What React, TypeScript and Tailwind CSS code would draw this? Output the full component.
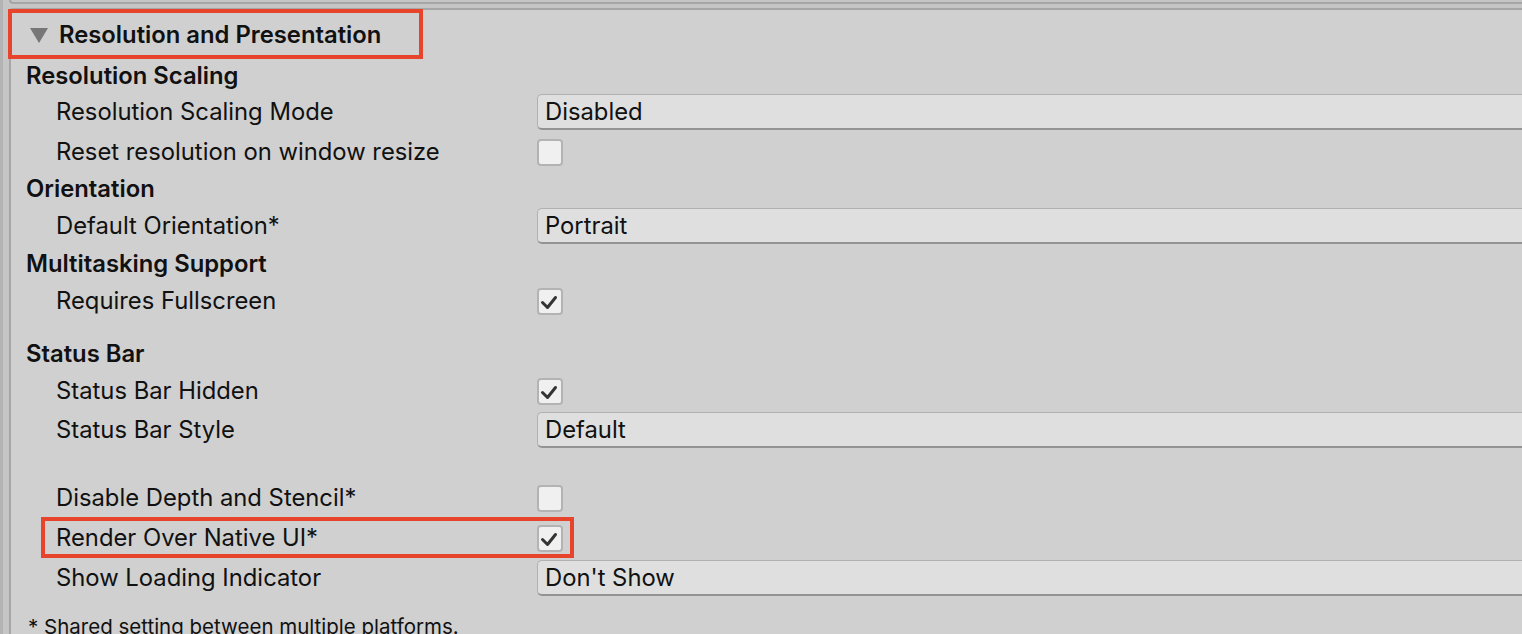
type Row =
  | { kind: "section"; label: string; h: number }
  | { kind: "dropdown"; label: string; value: string; h: number }
  | { kind: "check"; label: string; checked: boolean; h: number }
  | { kind: "space"; h: number };

const rows: Row[] = [
  { kind: "section", label: "Resolution Scaling", h: 32 },
  { kind: "dropdown", label: "Resolution Scaling Mode", value: "Disabled", h: 40 },
  { kind: "check", label: "Reset resolution on window resize", checked: false, h: 40 },
  { kind: "section", label: "Orientation", h: 34 },
  { kind: "dropdown", label: "Default Orientation*", value: "Portrait", h: 40 },
  { kind: "section", label: "Multitasking Support", h: 36 },
  { kind: "check", label: "Requires Fullscreen", checked: true, h: 38 },
  { kind: "space", h: 16 },
  { kind: "section", label: "Status Bar", h: 36 },
  { kind: "check", label: "Status Bar Hidden", checked: true, h: 38 },
  { kind: "dropdown", label: "Status Bar Style", value: "Default", h: 40 },
  { kind: "space", h: 28 },
  { kind: "check", label: "Disable Depth and Stencil*", checked: false, h: 40 },
  { kind: "check", label: "Render Over Native UI*", checked: true, h: 40 },
  { kind: "dropdown", label: "Show Loading Indicator", value: "Don't Show", h: 40 },
  { kind: "space", h: 14 },
];

function Checkbox({ checked }: { checked: boolean }) {
  return (
    <div className="w-[26px] h-[27px] rounded-[4px] border-2 border-[#b3b3b3] bg-[#f0f0f0] box-border">
      {checked && (
        <svg width="22" height="23" viewBox="0 0 22 23" className="block">
          <path d="M3.5 12.5 L8.5 17.5 L16.5 7.5" fill="none" stroke="#333333" strokeWidth="3" strokeLinecap="round" strokeLinejoin="round" />
        </svg>
      )}
    </div>
  );
}

function Dropdown({ value }: { value: string }) {
  return (
    <div className="flex-1 h-[36px] flex items-center pl-[7px] bg-[#dfdfdf] rounded-l-[5px] border-t-[1.5px] border-l-[1.5px] border-b-2 border-t-[#b0b0b0] border-l-[#b0b0b0] border-b-[#939393] box-border">
      {value}
    </div>
  );
}

export default function App() {
  return (
    <div
      className="w-[1522px] h-[634px] overflow-hidden relative flex bg-[#c5c5c5] text-[23.8px] text-[#111111]"
      style={{ fontFamily: "Inter, 'Noto Sans', sans-serif" }}
    >
      {/* window edge */}
      <div className="w-[3px] bg-[#b3b3b3] shrink-0" />
      <div className="w-[6px] shrink-0" />

      <div className="flex-1 min-w-0">
        {/* bottom of the previous foldout */}
        <div className="h-[4px] border-l-2 border-b-2 border-[#a6a6a6] rounded-bl-[4px]" />
        <div className="h-[4px]" />

        <div className="bg-[#d0d0d0] border-t-2 border-l-2 border-[#a6a6a6] rounded-tl-[4px] pb-[40px]">
          {/* foldout header */}
          <div className="h-[50px] flex items-center pl-[19px] gap-[11px] font-semibold">
            <svg width="18" height="15" viewBox="0 0 18 15">
              <path d="M0 0 H18 L9 15 Z" fill="#777777" />
            </svg>
            <span>Resolution and Presentation</span>
          </div>

          {rows.map((row, i) => {
            if (row.kind === "space") return <div key={i} style={{ height: row.h }} />;
            if (row.kind === "section")
              return (
                <div key={i} className="flex items-center pl-[15px] font-semibold" style={{ height: row.h }}>
                  {row.label}
                </div>
              );
            return (
              <div key={i} className="flex items-center" style={{ height: row.h }}>
                <div className="w-[526px] shrink-0 pl-[45px]">{row.label}</div>
                {row.kind === "dropdown" ? <Dropdown value={row.value} /> : <Checkbox checked={row.checked} />}
              </div>
            );
          })}

          <div className="pl-[17px] text-[20.5px] leading-[30px]">* Shared setting between multiple platforms.</div>
        </div>
      </div>

      {/* highlight annotations */}
      <div className="absolute left-[8px] top-[9px] w-[415px] h-[50px] border-4 border-[#e8442c]" />
      <div className="absolute left-[41px] top-[517px] w-[533px] h-[41px] border-4 border-[#e8442c]" />
    </div>
  );
}
